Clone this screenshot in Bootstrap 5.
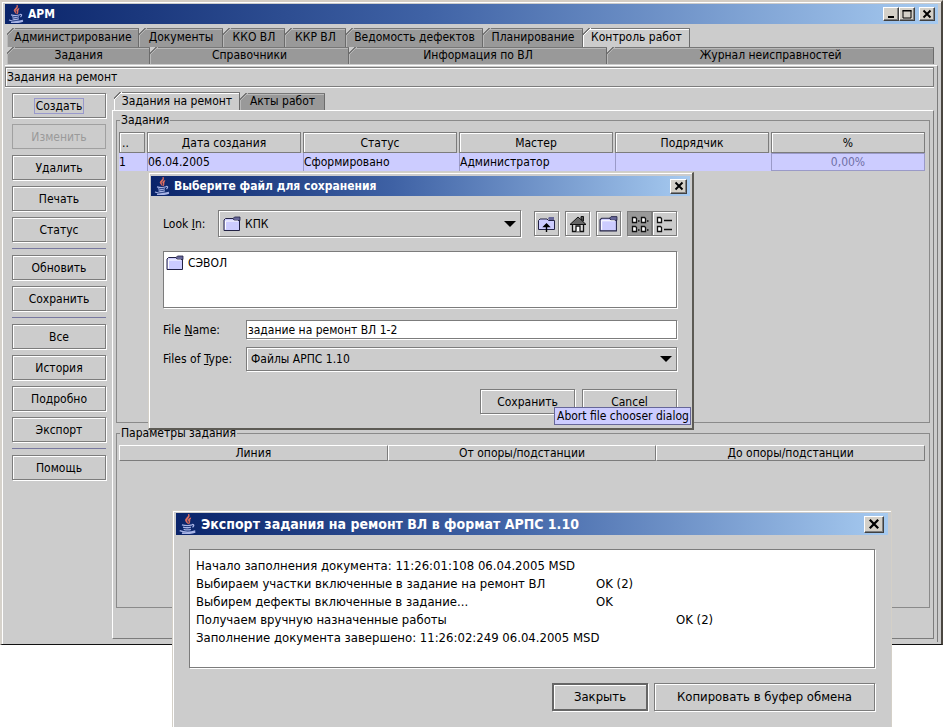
<!DOCTYPE html>
<html lang="ru">
<head>
<meta charset="utf-8">
<meta name="viewport" content="width=device-width, initial-scale=1">
<title>АРМ</title>
<link href="https://cdn.jsdelivr.net/npm/bootstrap@5.3.0/dist/css/bootstrap.min.css" rel="stylesheet">
<style>
:root{--face:#ccc;--edge:#7c7c7c;--tabbg:#999;--sel:#ccccff;}
body{background:#fff;color:#000;font:12px/14px "DejaVu Sans Condensed","DejaVu Sans",sans-serif;overflow:hidden;}
button,input,select,textarea{font:inherit;color:inherit;border-radius:0;}
.desk{min-height:100vh;}
.win{background:var(--face);}
.win-main{border:2px solid #d6d2cb;border-top-color:#d4cdc4;border-right:2px solid #4a4640;border-bottom:1px solid #111;padding:2px 3px 2px 3px;box-shadow:inset 1px 1px 0 #fff;}
.win-dlg{position:absolute;border:1px solid #d4d0c8;box-shadow:inset 1px 1px 0 #fff;}
.dlg-file{left:148px;top:172px;width:546px;border-right:2px solid #5c5a54;border-bottom:2px solid #5c5a54;padding:3px 2px 14px 2px;}
.dlg-log{left:172px;top:510px;width:720px;padding:2px 3px 17px 3px;min-height:220px;}
.bar{background:linear-gradient(90deg,#0a246a,#3f62a5 45%,#a6caf0);color:#fff;font-weight:700;height:20px;padding:0 3px;}
.dlg-log .bar{height:22px;font-size:14px;padding:0 4px 0 2px;}
.logo{width:16px;height:18px;}
.dlg-log .logo{width:19px;height:20px;}
.sysbtn{width:16px;height:14px;padding:0;background:#d4d0c8;border:1px solid;border-color:#fff #404040 #404040 #fff;box-shadow:inset -1px -1px 0 #808080;display:flex;align-items:center;justify-content:center;}
.dlg-file .sysbtn{width:17px;height:15px;}
.dlg-log .sysbtn{width:20px;height:17px;}
.tabs{padding-left:2px;}
.tabs.first-row{padding-top:4px;}
.tabs.second-row{padding-right:4px;}
.tb{border:0;height:19px;padding:0 0 1px;text-align:center;white-space:nowrap;--c:var(--tabbg);--h:#b9b9b9;
 background:linear-gradient(135deg,var(--face) 4px,#777 4px,#777 5px,var(--h) 5px,var(--h) 6px,transparent 6px) 0 0/9px 9px no-repeat,
 linear-gradient(#777,#777) 0 0/100% 1px no-repeat,
 linear-gradient(#6b6b6b,#6b6b6b) 100% 0/1px 100% no-repeat,
 linear-gradient(var(--h),var(--h)) 0 1px/100% 1px no-repeat,
 linear-gradient(var(--h),var(--h)) 0 0/1px 100% no-repeat,var(--c);}
.tb.on{--c:var(--face);--h:#fff;}
.second-row .tb{height:17px;}
.w1{width:132px}.w2{width:84px}.w3{width:62px}.w4{width:61px}.w5{width:137px}.w6{width:100px}.w7{width:107px}
.g1{flex:143 1 0}.g2{flex:198 1 0}.g3{flex:258 1 0}.g4{flex:326 1 0}
.work{border-top:1px solid #fff;border-right:1px solid var(--edge);margin:1px 0 0 0;padding:1px 3px 3px 0;}
.crumb{border:1px solid var(--edge);box-shadow:inset 1px 1px 0 #fff,0 1px 0 #fff;height:20px;padding:2px 0 2px 1px;}
.side{width:94px;margin:6px 6px 0 7px;}
.pane-right{min-width:0;margin-top:5px;}
.grp{gap:6px;}
.grp+.grp{margin-top:6px;border-top:1px solid #77779f;padding-top:6px;}
.mb{background:var(--face);border:1px solid var(--edge);box-shadow:inset 1px 1px 0 #fff,1px 1px 0 #fff;padding:0 2px;height:25px;text-align:center;white-space:nowrap;}
.mb:disabled{color:#9a9a9a;border-color:#a0a0a0;box-shadow:none;}
.foc{outline:1px solid #9999cc;padding:0 1px;}
.itabs{padding-left:2px;}
.t1{width:126px;height:18px}.t2{width:85px;height:17px;}
.panel{border:1px solid;border-color:#fff var(--edge) var(--edge) #fff;padding:2px 3px 30px 3px;}
fieldset{border:1px solid #8a8a8a;padding:5px 4px 0 2px;min-width:0;}
fieldset legend{float:none;width:auto;font-size:12px;line-height:14px;padding:0 1px;margin:0 0 0 1px;}
.fs1{min-height:310px;}
.fs2{min-height:182px;margin-top:3px;}
.tbl{width:100%;table-layout:fixed;border-collapse:separate;border-spacing:0;}
.tbl th{font-weight:400;text-align:center;border:1px solid var(--edge);box-shadow:inset 1px 1px 0 #fff;padding:3px 2px 2px;height:20px;}
.fs1 .tbl{border-spacing:2px 0;margin-left:-2px;width:calc(100% + 4px);}
.fs1 .tbl td{background:var(--sel);height:18px;padding:1px 0;box-shadow:2px 0 0 var(--sel);white-space:nowrap;border-left:1px solid #9a9ac8;}
.fs1 .tbl td:first-child{border-left:0;}
.fs1 .tbl td:last-child{box-shadow:none;border:1px solid #9a9ac8;padding:0;color:#6f6fa6;text-align:center;}
.fs2 .tbl th{height:16px;padding:0;border:0;border-top:1px solid #fff;border-left:1px solid #fff;border-bottom:1px solid var(--edge);border-right:1px solid var(--edge);box-shadow:none;}
.num{width:26px;}
.dots{text-align:left !important;}
.fbody{padding:14px 13px 0 12px;}
.look-row{gap:13px;}
.lbl{width:83px;}
.lbl-s{width:55px;}
.combo{background:var(--face) no-repeat;border:1px solid var(--edge);box-shadow:inset 1px 1px 0 #fff,1px 1px 0 #fff;height:27px;padding:0 4px;}
.combo.low{height:24px;}
.combo select{appearance:none;border:0;background:transparent;padding:0;outline:0;}
.combo .arr{width:12px;height:6px;pointer-events:none;}
.ib{width:25px;height:25px;padding:0;background:var(--face);border:1px solid var(--edge);box-shadow:inset 1px 1px 0 #fff,1px 1px 0 #fff;display:flex;align-items:center;justify-content:center;}
.ib.dn{background:#999;box-shadow:1px 1px 0 #fff;}
.ib svg{width:19px;height:18px;}
.icons{gap:6px;}
.fold{width:18px;height:16px;}
.files{height:57px;border:1px solid var(--edge);box-shadow:1px 1px 0 #fff;background:#fff;margin-top:14px;padding:3px 2px;}
.inp{border:1px solid var(--edge);box-shadow:1px 1px 0 #fff;background:#fff;height:19px;padding:0 1px;min-width:0;}
.acts{gap:7px;margin-top:18px;}
.acts .mb{width:95px;}
.tipbox{position:absolute;left:405px;top:234px;background:var(--sel);border:1px solid #666699;padding:1px 1px 2px 2px;height:18px;white-space:nowrap;}
.dlg-log .lb{padding:14px 13px 0;font-size:13px;}
.logarea{display:block;width:100%;height:119px;resize:none;overflow:hidden;border:1px solid var(--edge);box-shadow:1px 1px 0 #fff;background:#fff;padding:7px 6px;line-height:18px;tab-size:80px;white-space:pre;outline:0;}
.lbtns{gap:6px;margin-top:15px;}
.lbtns .mb{height:28px;}
.lbtns .b1{width:96px;border:2px solid #666;}
.lbtns .b2{width:221px;}
</style>
<script src="https://cdn.jsdelivr.net/npm/bootstrap@5.3.0/dist/js/bootstrap.bundle.min.js"></script>
</head>
<body>
<svg width="0" height="0" class="position-absolute" aria-hidden="true">
 <symbol id="java" viewBox="0 0 16 18">
  <path d="M9 0C10 2.500 5 4 6.500 6.500L8 8.500C8 6.500 6.500 6 8 4.500 9.500 3 10 1.500 9 0zM11 3.500C8.500 4.500 8 5.500 9.500 7L9 9C11 7 9 6 11 3.500z" fill="#f07a66" stroke="#e8705c" stroke-width=".7"/>
  <path d="M3 9.800q5 1.400 9 0M4 11.800q4 1.200 7 0M4.500 13.800q4 1 6.500 0M12 9.300q3 0 .5 2.700M1 15q6.500 2.600 14 .2M3 17.300q7 .8 12-1" fill="none" stroke="#a8b4e6" stroke-width="1.200"/>
 </symbol>
 <symbol id="folder" viewBox="0 0 18 16">
  <path d="M1 14.500V4L2.500 2.500H10L11.500 4H16.500V14.500z" fill="#ccccff" stroke="#222244"/>
  <path d="M10 2.500L11.500 1H17V4.500H11.500z" fill="#666699" stroke="#222244" stroke-width=".8"/>
  <path d="M2.500 13.500V5H15" fill="none" stroke="#fff"/>
 </symbol>
 <symbol id="cross" viewBox="0 0 10 10"><path d="M1.500 1.500l7 7M8.500 1.500l-7 7" stroke="#000" stroke-width="1.900"/></symbol>
 <symbol id="down" viewBox="0 0 12 6"><path d="M0 0h12L6 6z"/></symbol>
</svg>

<div class="desk position-relative">
<main class="win win-main">
 <header class="bar d-flex align-items-center">
  <svg class="logo me-1"><use href="#java"/></svg><span class="flex-grow-1">АРМ</span>
  <button class="sysbtn" aria-label="Свернуть"><svg width="10" height="10"><path d="M2 7h6v2H2z"/></svg></button>
  <button class="sysbtn" aria-label="Развернуть"><svg width="10" height="10"><path d="M1 1.500h8V9H1z" fill="none" stroke="#000"/><path d="M.5 1h9v1.500h-9z"/></svg></button>
  <button class="sysbtn ms-1" aria-label="Закрыть"><svg width="10" height="10"><use href="#cross"/></svg></button>
 </header>
 <nav class="tabs first-row d-flex">
  <button class="tb w1">Администрирование</button><button class="tb w2">Документы</button><button class="tb w3">ККО ВЛ</button><button class="tb w4">ККР ВЛ</button><button class="tb w5">Ведомость дефектов</button><button class="tb w6">Планирование</button><button class="tb w7 on">Контроль работ</button>
 </nav>
 <nav class="tabs second-row d-flex">
  <button class="tb g1">Задания</button><button class="tb g2">Справочники</button><button class="tb g3">Информация по ВЛ</button><button class="tb g4">Журнал неисправностей</button>
 </nav>
 <section class="work">
  <div class="crumb">Задания на ремонт</div>
  <div class="d-flex">
   <aside class="side flex-shrink-0">
    <div class="grp d-grid"><button class="mb"><span class="foc">Создать</span></button><button class="mb" disabled>Изменить</button><button class="mb">Удалить</button><button class="mb">Печать</button><button class="mb">Статус</button></div>
    <div class="grp d-grid"><button class="mb">Обновить</button><button class="mb">Сохранить</button></div>
    <div class="grp d-grid"><button class="mb">Все</button><button class="mb">История</button><button class="mb">Подробно</button><button class="mb">Экспорт</button></div>
    <div class="grp d-grid"><button class="mb">Помощь</button></div>
   </aside>
   <div class="pane-right flex-grow-1">
    <nav class="itabs d-flex align-items-end"><button class="tb t1 on">Задания на ремонт</button><button class="tb t2">Акты работ</button></nav>
    <div class="panel">
     <fieldset class="fs1"><legend>Задания</legend>
      <table class="tbl">
       <colgroup><col class="num"><col><col><col><col><col></colgroup>
       <thead><tr><th class="dots">..</th><th>Дата создания</th><th>Статус</th><th>Мастер</th><th>Подрядчик</th><th>%</th></tr></thead>
       <tbody><tr><td>1</td><td>06.04.2005</td><td>Сформировано</td><td>Администратор</td><td></td><td>0,00%</td></tr></tbody>
      </table>
     </fieldset>
     <fieldset class="fs2"><legend>Параметры задания</legend>
      <table class="tbl"><thead><tr><th>Линия</th><th>От опоры/подстанции</th><th>До опоры/подстанции</th></tr></thead></table>
     </fieldset>
    </div>
   </div>
  </div>
 </section>
</main>

<section class="win win-dlg dlg-file" role="dialog" aria-label="Выберите файл для сохранения">
 <header class="bar d-flex align-items-center"><svg class="logo me-1"><use href="#java"/></svg><span class="flex-grow-1">Выберите файл для сохранения</span>
  <button class="sysbtn" aria-label="Закрыть"><svg width="10" height="10"><use href="#cross"/></svg></button></header>
 <div class="fbody">
  <div class="look-row d-flex align-items-center">
   <div class="d-flex align-items-center flex-grow-1">
    <label class="lbl-s" for="look">Look <u>I</u>n:</label>
    <div class="combo d-flex align-items-center flex-grow-1"><svg class="fold me-1"><use href="#folder"/></svg><select id="look" class="flex-grow-1"><option>КПК</option></select><svg class="arr"><use href="#down"/></svg></div>
   </div>
   <div class="icons d-flex">
    <button class="ib" aria-label="Вверх"><svg viewBox="0 0 19 18"><path d="M1.500 14.500V5.500L3 4H10L11.500 5.500H17.500V14.500z" fill="#ccccff" stroke="#222244"/><path d="M11 3.500L12 2H17V5H12z" fill="#666699"/><path d="M9.500 17V10M7 11.500L9.500 9 12 11.500z" stroke="#000" stroke-width="1.400"/></svg></button>
    <button class="ib" aria-label="Домой"><svg viewBox="0 0 19 18"><path d="M4.500 9v7.500h11V9L10 3.500z" fill="#ddd" stroke="#111" stroke-width="1.300"/><path d="M2 9.500L10 2l8 7.500z" fill="#666" stroke="#111"/><path d="M13 1.500h2.500V6L13 4z" fill="#555" stroke="#111"/><path d="M8 16.500V11h4v5.500" fill="#fff" stroke="#111" stroke-width="1.300"/></svg></button>
    <button class="ib" aria-label="Новая папка"><svg viewBox="0 0 18 16"><use href="#folder" width="18" height="16"/></svg></button>
    <div class="d-flex gap-0">
     <button class="ib dn" aria-label="Список"><svg viewBox="0 0 19 18"><g fill="#fff" stroke="#111" stroke-width="1.300"><path d="M2.500 2.500h3l1 1v4h-4zM11.500 2.500h3l1 1v4h-4zM2.500 11.500h3l1 1v4h-4zM11.500 11.500h3l1 1v4h-4z"/><path d="M8 6h1.500M17 6h1.500M8 15h1.500M17 15h1.500"/></g></svg></button>
     <button class="ib" aria-label="Подробности"><svg viewBox="0 0 19 18"><g fill="#fff" stroke="#111" stroke-width="1.300"><path d="M2.500 2.500h3l1 1v4h-4zM2.500 11.500h3l1 1v4h-4zM9 5.500h8M9 14.500h8"/></g></svg></button>
    </div>
   </div>
  </div>
  <ul class="files list-unstyled mb-0"><li class="d-flex align-items-center"><svg class="fold me-1"><use href="#folder"/></svg>СЭВОЛ</li></ul>
  <div class="d-flex align-items-center mt-2 pt-1"><label class="lbl" for="fn">File <u>N</u>ame:</label><input id="fn" class="inp flex-grow-1" value="задание на ремонт ВЛ 1-2"></div>
  <div class="d-flex align-items-center mt-2"><label class="lbl" for="ft">Files of <u>T</u>ype:</label>
   <div class="combo low flex-grow-1 d-flex align-items-center"><select id="ft" class="flex-grow-1"><option>Файлы АРПС 1.10</option></select><svg class="arr"><use href="#down"/></svg></div></div>
  <div class="acts d-flex justify-content-end"><button class="mb">Сохранить</button><button class="mb">Cancel</button></div>
 </div>
 <div class="tipbox" role="tooltip">Abort file chooser dialog</div>
</section>

<section class="win win-dlg dlg-log" role="dialog" aria-label="Экспорт задания">
 <header class="bar d-flex align-items-center"><svg class="logo me-1"><use href="#java"/></svg><span class="flex-grow-1">Экспорт задания на ремонт ВЛ в формат АРПС 1.10</span>
  <button class="sysbtn" aria-label="Закрыть"><svg width="12" height="12"><use href="#cross"/></svg></button></header>
 <div class="lb">
  <textarea class="logarea" readonly aria-label="Журнал экспорта">Начало заполнения документа: 11:26:01:108 06.04.2005 MSD
Выбираем участки включенные в задание на ремонт ВЛ&#9;OK (2)
Выбирем дефекты включенные в задание...&#9;&#9;OK
Получаем вручную назначенные работы&#9;&#9;&#9;OK (2)
Заполнение документа завершено: 11:26:02:249 06.04.2005 MSD</textarea>
  <div class="lbtns d-flex justify-content-end"><button class="mb b1">Закрыть</button><button class="mb b2">Копировать в буфер обмена</button></div>
 </div>
</section>
</div>
</body>
</html>
